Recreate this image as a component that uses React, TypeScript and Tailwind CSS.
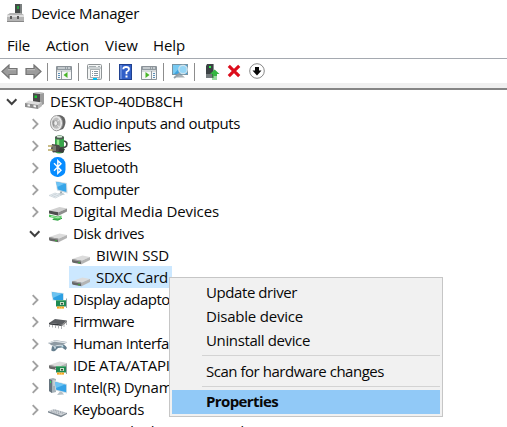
import React, { useLayoutEffect, useRef } from "react";

/** Text fitted to a given width by adjusting the tracking. */
function Label({ text, w, className = "" }: { text: string; w: number; className?: string }) {
  const ref = useRef<HTMLSpanElement>(null);
  useLayoutEffect(() => {
    const el = ref.current;
    if (!el) return;
    el.style.letterSpacing = "0px";
    const natural = el.getBoundingClientRect().width;
    el.style.letterSpacing = `${(w - natural) / text.length}px`;
  }, [text, w]);
  return (
    <span ref={ref} className={`inline-block shrink-0 whitespace-pre ${className}`}>
      {text}
    </span>
  );
}

function Svg({ w = 22, h = 22, children }: { w?: number; h?: number; children: React.ReactNode }) {
  return (
    <svg width={w} height={h} viewBox={`0 0 ${w} ${h}`} className="block shrink-0" fill="none">
      {children}
    </svg>
  );
}

function Drive({ led = "#40a040" }: { led?: string }) {
  return (
    <>
      <path d="M2 15L12.5 11.5L20 13L11.5 16.8Z" fill="#dcdcdc" />
      <path d="M2 15L11.5 16.8V20.3L3 18.8Q2 18.5 2 17Z" fill="#666" />
      <path d="M2 15L11.5 16.8V17.8L2 16Z" fill="#a2a2a2" />
      <path d="M11.5 16.8L20 13V16L11.5 20.3Z" fill="#b4b4b4" />
      <path d="M8 18.6H10" stroke={led} strokeWidth="1.2" />
    </>
  );
}

function Board() {
  return (
    <>
      <path d="M9 12H20V18.5H9Z" fill="#1f8a52" />
      <path d="M9 12.5H19" stroke="#58b07a" />
      <path d="M13 14H17V17H13Z" fill="#c5dfc4" />
      <path d="M14 15H16V16.5H14Z" fill="#31543d" />
      <path d="M10 18.5H17V20.6H10Z" fill="#f6a421" />
      <path d="M12.5 19V21M14.5 19V21" stroke="#ffdc70" strokeWidth=".6" />
      <path d="M19.5 10.5V20" stroke="#9aa5a5" />
    </>
  );
}

const icons: Record<string, React.ReactNode> = {
  root: (
    <>
      <path d="M9 3L13 2L19 3V14L15.5 16L9 13Z" fill="#9b9b9b" />
      <path d="M8 3L15 4V14L8 12Z" fill="#4a4a4a" />
      <path d="M8 3L12.5 2L19 3L15 4Z" fill="#c8c8c8" />
      <path d="M9.5 5.5H12V8H9.5Z" fill="#18c832" />
      <path d="M0 13L4 10.5L17 12.5L13 15Z" fill="#dedede" />
      <path d="M0 13L13 15V19L0 17Z" fill="#8c8c8c" />
      <path d="M13 15L17 12.5V16L13 19Z" fill="#b8b8b8" />
      <path d="M2.5 14.2L5 14.6V16.6L2.5 16.2ZM8.5 15L11 15.4V17.4L8.5 17Z" fill="#f4f4f4" />
    </>
  ),
  audio: (
    <>
      <path d="M10 3Q16 2.5 18 7Q19.5 12 16 17L10 19Z" fill="#656565" />
      <ellipse cx="9.5" cy="11.2" rx="6" ry="7.6" fill="#efefef" stroke="#9a9a9a" strokeWidth="1" />
      <ellipse cx="9.3" cy="11.2" rx="4.3" ry="5.8" fill="#bcbcbc" stroke="#dadada" strokeWidth=".8" />
      <path d="M6 8L9 11L6.5 15Q4.5 11 6 8Z" fill="#939393" />
      <ellipse cx="8.7" cy="11.2" rx="1.9" ry="2.6" fill="#ececec" stroke="#8d8d8d" strokeWidth=".6" />
      <path d="M10.5 9L12.5 7.5M10.5 13.5L12.5 15" stroke="#eee" />
    </>
  ),
  battery: (
    <>
      <path d="M8 4Q8 1.5 12.5 1.5Q17 1.5 17 4V18Q12 21 8 18Z" fill="#38a44a" />
      <path d="M11 5V17" stroke="#8fe486" strokeWidth="2.4" />
      <ellipse cx="12.5" cy="3.5" rx="4.5" ry="2" fill="#4b5a50" />
      <ellipse cx="12.5" cy="2.8" rx="3" ry="1" fill="#d8e8d8" />
      <path d="M17 7Q21 8 19.5 12Q18 14 12 14" stroke="#444" strokeWidth="1.7" />
      <path d="M5 10L12 11L14 14L12 18L6 18.5L4 15Z" fill="#4c4b47" />
      <path d="M1 12H6M1 16H7" stroke="#b8a660" strokeWidth="1.5" />
      <path d="M5 11L9 12V17L6 17Z" fill="#7b7b70" />
      <path d="M13 14L18 15L16 19L11 18Z" fill="#3b3b3b" />
    </>
  ),
  bluetooth: (
    <>
      <rect x="3" y="1" width="15.5" height="20" rx="7.3" fill="#078cff" />
      <path d="M7 7.3L14 14.2L10.8 17.3V4.7L14 7.8L7 14.7" stroke="white" strokeWidth="1.4" />
    </>
  ),
  computer: (
    <>
      <path d="M8.5 3L20 5L20.5 15.5L10 12.5Z" fill="#cfdbe2" />
      <path d="M9.3 4L19 5.8L19.4 14L10.7 11.5Z" fill="#37a5e8" />
      <path d="M9.3 4L18 5.6L10.2 9Z" fill="#6cc3f5" />
      <path d="M14.5 13.5L13.5 16" stroke="#9baab2" strokeWidth="2" />
      <path d="M11 15.5L16 15L18 16.5L13 17.5Z" fill="#c0cbd0" />
      <path d="M2 17.5L8 15L14.5 17L8.5 20Z" fill="#e8eef2" stroke="#c3cdd4" strokeWidth=".6" />
      <path d="M4.5 17.8L9.5 16M6.5 18.8L12 17" stroke="#b7c2ca" strokeWidth=".6" />
    </>
  ),
  digital: (
    <>
      <g transform="translate(0 -4.5)">
        <path d="M2 15L12.5 11.5L20 13L11.5 16.8Z" fill="#d0d0d0" />
        <path d="M2 15L11.5 16.8V20.3L2 18Z" fill="#4e4e4e" />
        <path d="M11.5 16.8L20 13V16L11.5 20.3Z" fill="#8e8e8e" />
      </g>
      <path d="M2 14.5L11 16.5L14.5 15.5V18L11 20.5L5 19.5L7 18L2 17Z" fill="#50c45c" />
      <path d="M4 16.2L11 17.8L13.5 16.8" stroke="#b4ecb6" strokeWidth=".9" />
      <path d="M6 19.5L11 20L15 18.3" stroke="#2c9f40" />
    </>
  ),
  disk: <Drive />,
  display: (
    <>
      <path d="M4 3.5L17 5V14L5.5 12.5Z" fill="#d5e5ee" />
      <path d="M5 4.3L16 5.7V13L6.3 11.7Z" fill="#2d9fe2" />
      <path d="M5 4.3L15.5 5.6L6 10Z" fill="#6cc3f1" />
      <Board />
    </>
  ),
  firmware: (
    <>
      <path d="M2 13L8 9L20 10.5L15 14.5Z" fill="#5b5e62" />
      <path d="M2 13L15 14.5V16L2 14.6Z" fill="#35383c" />
      <path d="M15 14.5L20 10.5V12L15 16Z" fill="#777" />
      <path d="M2.5 14.5V17M5.5 15V17.5M8.5 15V18M11.5 15.5V18.5M14.5 15.5V19M17 14V17M19.5 12V15" stroke="#a7a9ad" strokeWidth=".9" />
    </>
  ),
  human: (
    <>
      <path d="M1 11L8 8L20 10L17 12.5L5 13.5Z" fill="#8e9aa3" />
      <path d="M2 11L8 9L19 10.8" stroke="#dfe4e8" strokeWidth="1.3" />
      <path d="M5 14.5Q7 12 11 13.5L15 12.5Q18 12 20 16L18.5 18L15 15.5L11 16L8 19Q3.5 20 4.5 17Z" fill="#667f8f" />
      <path d="M6.5 14.5L10 13.7L16 13.7" stroke="#dce4e9" />
      <circle cx="8" cy="15.8" r="1" fill="#c4d6df" /><circle cx="15.5" cy="14.4" r="1" fill="#b4d8e3" />
    </>
  ),
  ide: (
    <>
      <g transform="translate(0 -4)"><Drive led="#bbb" /></g>
      <Board />
    </>
  ),
  intel: (
    <>
      <path d="M2 3L6 2L9 3V16L5 17L2 15Z" fill="#a8b3ba" />
      <path d="M2 3L5 4V17L2 15Z" fill="#66747e" />
      <path d="M6 5H9M6 7H9M6 9H9" stroke="#dbe3e6" />
      <path d="M3.5 5V7" stroke="#33db60" />
      <path d="M7.5 5L20 8V17.5L8.5 14.5Z" fill="#d4dfe5" />
      <path d="M8.3 6L19.2 8.8V16.3L9.2 13.8Z" fill="#35a2e6" />
      <path d="M8.3 6L18 8.5L9 12Z" fill="#6cc4f3" />
      <path d="M13 15.5L10 19L17 18.5L15 16" fill="#b5c0c6" />
    </>
  ),
  keyboard: (
    <>
      <path d="M1 13L7 11L20 14.8L14 18Z" fill="#d2d6da" />
      <path d="M1 13L14 17.5L20 14.8V16L14 19.3L1 14.5Z" fill="#7c8790" />
      <path d="M4 13L13 16M6 12L16 15.6M8 12L18 15" stroke="#8a949d" strokeWidth=".7" strokeDasharray="1.5 1" />
    </>
  ),
};

function Chevron({ open = false }: { open?: boolean }) {
  return (
    <Svg w={12} h={22}>
      {open ? (
        <path d="M1 9.3L5.7 14L10.4 9.3" stroke="#404040" strokeWidth="2" />
      ) : (
        <path d="M3.7 7.2L8.5 12L3.7 16.8" stroke="#a2a2a2" strokeWidth="1.9" />
      )}
    </Svg>
  );
}

const rows = [
  { text: "Audio inputs and outputs", w: 167, icon: "audio" },
  { text: "Batteries", w: 58, icon: "battery" },
  { text: "Bluetooth", w: 65, icon: "bluetooth" },
  { text: "Computer", w: 66, icon: "computer" },
  { text: "Digital Media Devices", w: 146, icon: "digital" },
  { text: "Disk drives", w: 71, icon: "disk", open: true },
  { text: "BIWIN SSD", w: 73, icon: "disk", child: true },
  { text: "SDXC Card", w: 72, icon: "disk", child: true, selected: true },
  { text: "Display adaptors", w: 109, icon: "display" },
  { text: "Firmware", w: 61, icon: "firmware" },
  { text: "Human Interface Devices", w: 164, icon: "human" },
  { text: "IDE ATA/ATAPI controllers", w: 172, icon: "ide" },
  { text: "Intel(R) Dynamic Platform", w: 172, icon: "intel" },
  { text: "Keyboards", w: 71, icon: "keyboard" },
];

function MenuItem({ text, w, bold = false }: { text: string; w: number; bold?: boolean }) {
  return (
    <div className={`mx-[2px] flex h-6 items-start pl-[34px] ${bold ? "bg-[#91c9f7] font-bold" : ""}`}>
      <Label text={text} w={w} />
    </div>
  );
}

function Divider() {
  return <div className="h-[18px] w-px shrink-0 bg-[#8d8d8d]" />;
}

function Panel({ right = false }: { right?: boolean }) {
  return (
    <Svg w={16} h={14}>
      <path d="M.5.5H15.5V13.5H.5Z" fill="#f6f7f7" stroke="#8b9298" />
      <path d="M1 1H15V4H1Z" fill="#929ba1" />
      <path d="M2 2H9M10 2H11M12 2H14" stroke="#f4f7f8" />
      <path d="M1 5H15" stroke="#b5bcc0" />
      {right ? (
        <>
          <path d="M4.5 6V12L8.5 9Z" fill="#49b629" />
          <path d="M10.5 5V13" stroke="#939ba1" /><path d="M12 7.5H14M12 9.5H14M12 11.5H14" stroke="#5b8fb7" />
        </>
      ) : (
        <>
          <path d="M11.5 6V12L7.5 9Z" fill="#49b629" />
          <path d="M5.5 5V13" stroke="#939ba1" /><path d="M2 7.5H4M2 9.5H4M2 11.5H4" stroke="#5b8fb7" />
        </>
      )}
    </Svg>
  );
}

function Arrow({ flip = false }: { flip?: boolean }) {
  return (
    <Svg w={17} h={16}>
      <path
        d={flip ? "M16 7.5L9 1V4.5H1V10.5H9V14Z" : "M1 7.5L8 1V4.5H16V10.5H8V14Z"}
        fill="#9c9c9c" stroke="#747474" strokeWidth="1.2"
      />
      <path d={flip ? "M2 5.7H10" : "M7 5.7H15"} stroke="#c0c0c0" />
    </Svg>
  );
}

function Toolbar() {
  return (
    <div className="box-content flex h-[22px] shrink-0 items-center border-t border-[#a5a9b0] bg-white pt-[2px]">
      <div className="ml-[1px]"><Arrow /></div>
      <div className="ml-[7px]"><Arrow flip /></div>
      <div className="ml-[5px]"><Divider /></div>
      <div className="ml-[8px] mt-[2px]"><Panel /></div>
      <div className="ml-[6px]"><Divider /></div>
      <div className="ml-[8px]">
        <Svg w={16} h={16}>
          <rect x=".5" y=".5" width="14" height="15" rx="1" fill="#f3f5f5" stroke="#8f9496" />
          <path d="M2 2.5H9M11 2.5H13M1 4H14" stroke="#a5adb0" />
          <rect x="3.5" y="5.5" width="9" height="8" fill="white" stroke="#adb3b5" />
          <path d="M5 7.5H6M7 7.5H11M5 9.5H6M7 9.5H11M5 11.5H6M7 11.5H11" stroke="#8796a0" />
          <path d="M6 15H10" stroke="#00c0f3" strokeWidth="2" /><path d="M11 15H14" stroke="#b2b6b8" />
        </Svg>
      </div>
      <div className="ml-[6px]"><Divider /></div>
      <div className="ml-[9px]">
        <Svg w={13} h={16}>
          <rect x=".5" y=".5" width="12" height="15" fill="#315fc8" stroke="#20418f" />
          <path d="M1 1H3V15H1Z" fill="#6086d8" />
          <path d="M4.3 5.3Q4.3 3 7 3Q10 3 10 5.2Q10 7 7.5 8V10.3" stroke="white" strokeWidth="1.8" />
          <rect x="6.5" y="11.5" width="2" height="2" fill="white" />
        </Svg>
      </div>
      <div className="ml-[9px] mt-[2px]"><Panel right /></div>
      <div className="ml-[6px]"><Divider /></div>
      <div className="ml-[8px]">
        <Svg w={17} h={18}>
          <rect x=".5" y="1.5" width="15" height="10" fill="#3fa4df" stroke="#7893a2" />
          <path d="M1 2H10L2 11H1Z" fill="#78caf2" />
          <path d="M6 12L4 14.5H13L10 12" fill="#a8b0b5" />
          <circle cx="11" cy="6.5" r="4.2" fill="#95d5f5" stroke="#cfe2ec" strokeWidth="1.3" />
          <path d="M8 10L2 15" stroke="#94a0a8" strokeWidth="1.8" />
        </Svg>
      </div>
      <div className="ml-[5px]"><Divider /></div>
      <div className="ml-[10px]">
        <Svg w={15} h={18}>
          <path d="M2 1H8.5V15L1 14V3Z" fill="#3c4144" /><path d="M8.5 1V11" stroke="#888e90" />
          <path d="M4 3H6V5H4Z" fill="#2df24c" /><path d="M1 11H7V15H1Z" fill="#737a7d" />
          <path d="M9.7 6.5L14.5 11H12V13H7.5V11H5Z" fill="#35b742" />
          <path d="M7 14H12M7 16H12" stroke="#35b742" strokeWidth="1.2" />
        </Svg>
      </div>
      <div className="ml-[7px] -mt-[2px]">
        <Svg w={14} h={14}>
          <path d="M1.8 1.8L12.2 12.2M12.2 1.8L1.8 12.2" stroke="#dc0d1c" strokeWidth="3.1" />
        </Svg>
      </div>
      <div className="-mt-[2px] ml-[8px]">
        <Svg w={16} h={16}>
          <circle cx="8" cy="8" r="7.3" fill="#fff" stroke="#888" />
          <path d="M6 4H10V7.5H12.5L8 12.5L3.5 7.5H6Z" fill="#080808" />
        </Svg>
      </div>
    </div>
  );
}

export default function App() {
  return (
    <div className="relative flex h-[427px] w-[507px] flex-col overflow-hidden bg-white font-['Open_Sans','Noto_Sans',sans-serif] text-[15px] leading-[22px] text-[#080808]">
      <div className="flex h-[27px] shrink-0 items-start pl-[6px] pt-[2px]">
        <Svg w={19} h={22}>
          <path d="M9 2H16V15H9Z" fill="#464b49" /><path d="M14 2H16V15H14Z" fill="#7b8080" />
          <path d="M11 4H13V7H11Z" fill="#2a9f42" />
          <path d="M1 13L4 11H15L18 13V20H1Z" fill="#b4b4b4" /><path d="M1 13H18V15H1Z" fill="#ddd" />
          <path d="M4 14H6V17H4ZM11 14H13V17H11Z" fill="#5a5a5a" />
          <path d="M1 19.5H18" stroke="#888" />
        </Svg>
        <Label text="Device Manager" w={108} className="ml-[6px]" />
      </div>
      <div className="flex h-[31px] shrink-0 items-center pl-[7px] pt-[5px]">
        <Label text="File" w={23} />
        <Label text="Action" w={43} className="ml-4" />
        <Label text="View" w={33} className="ml-4" />
        <Label text="Help" w={32} className="ml-[15px]" />
      </div>
      <Toolbar />
      <div className="h-[5px] shrink-0 bg-[#f0f0f0]" />
      <div className="h-[2px] shrink-0 bg-[#858585]" />
      <div className="flex h-[22px] shrink-0 items-start pl-[6px]">
        <Chevron open />
        <div className="ml-[7px]"><Svg w={19}>{icons.root}</Svg></div>
        <Label text="DESKTOP-40DB8CH" w={133} className="ml-[6px]" />
      </div>
      {rows.map((r) => (
        <div key={r.text} className={`flex h-[22px] shrink-0 items-start ${r.child ? "pl-[70px]" : "pl-[29px]"}`}>
          {!r.child && <Chevron open={r.open} />}
          <div className={r.child ? (r.selected ? "-ml-px bg-[#cce8ff] pl-px" : "") : "ml-[6px]"}>
            <Svg>{icons[r.icon]}</Svg>
          </div>
          <div className={`h-[22px] pl-1 ${r.selected ? "bg-[#cce8ff] pr-1" : ""}`}>
            <Label text={r.text} w={r.w} className="block w-max" />
          </div>
        </div>
      ))}
      <div className="flex shrink-0 items-start pl-[73px]">
        <Label text="Mice and other pointing devices" w={211} />
      </div>
      <div className="absolute left-[169px] top-[277px] flex h-[140px] w-[274px] flex-col border border-[#c6c6c6] bg-[#f1f1f1] pt-[3px]">
        <MenuItem text="Update driver" w={91} />
        <MenuItem text="Disable device" w={97} />
        <MenuItem text="Uninstall device" w={104} />
        <div className="mb-1 ml-8 mr-[2px] mt-[2px] h-px shrink-0 bg-[#d3d3d3]" />
        <MenuItem text="Scan for hardware changes" w={178} />
        <div className="mb-[3px] ml-8 mr-[2px] mt-[2px] h-px shrink-0 bg-[#d3d3d3]" />
        <MenuItem text="Properties" w={72} bold />
      </div>
    </div>
  );
}
